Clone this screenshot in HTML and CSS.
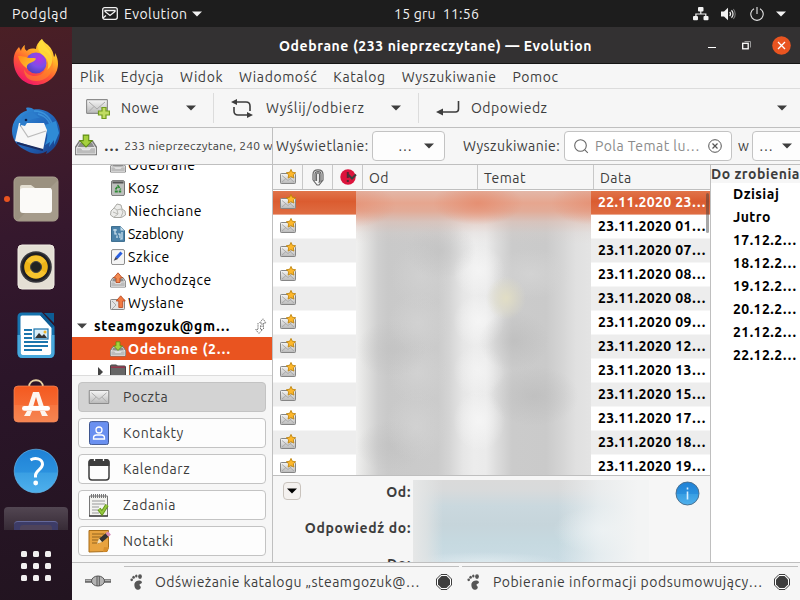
FILE: index.html
```html
<!DOCTYPE html>
<html lang="pl">
<head>
<meta charset="utf-8">
<title>Odebrane (233 nieprzeczytane) — Evolution</title>
<link rel="stylesheet" href="styles.css">
</head>
<body>
<svg class="defs" width="0" height="0" aria-hidden="true">
  <defs>
    <linearGradient id="silver" x1="0" y1="0" x2="0" y2="1"><stop offset="0" stop-color="#f6f6f6"/><stop offset="1" stop-color="#b9b9b9"/></linearGradient>
    <linearGradient id="blue" x1="0" y1="0" x2="0" y2="1"><stop offset="0" stop-color="#1f81d6"/><stop offset=".53" stop-color="#2b91de"/><stop offset=".54" stop-color="#3a9fe3"/><stop offset="1" stop-color="#4fb0ec"/></linearGradient>
    <linearGradient id="orange" x1="0" y1="0" x2="0" y2="1"><stop offset="0" stop-color="#f4591f"/><stop offset=".52" stop-color="#f56a33"/><stop offset=".53" stop-color="#f67640"/><stop offset="1" stop-color="#f68552"/></linearGradient>
    <linearGradient id="fox" x1=".9" y1="0" x2=".3" y2="1"><stop offset="0" stop-color="#fff04a"/><stop offset=".35" stop-color="#ffb527"/><stop offset=".65" stop-color="#ff5a33"/><stop offset="1" stop-color="#f0146a"/></linearGradient>
    <linearGradient id="foxhead" x1="0" y1="0" x2="1" y2=".6"><stop offset="0" stop-color="#ff8a1c"/><stop offset="1" stop-color="#ffc52b"/></linearGradient>
    <radialGradient id="globe" cx=".65" cy=".3" r=".8"><stop offset="0" stop-color="#b833e1"/><stop offset=".5" stop-color="#7a4fe8"/><stop offset="1" stop-color="#4a3db4"/></radialGradient>
    <linearGradient id="bird" x1="0" y1="0" x2="1" y2="1"><stop offset="0" stop-color="#3593dd"/><stop offset=".5" stop-color="#2268bd"/><stop offset="1" stop-color="#173b84"/></linearGradient>
    <symbol id="newmail" viewBox="0 0 16 16">
      <rect x=".5" y="4.500" width="15" height="10" rx=".8" fill="url(#silver)" stroke="#858585"/>
      <path d="M2 6.500l6 5 6-5M2 13l4-3.500M14 13l-4-3.500" fill="none" stroke="#a5a5a5" stroke-width=".9"/>
      <path d="M11 .4l1.400 2.900 3.200.4-2.300 2.200.6 3.200L11 7.600 8.100 9.100l.6-3.200L6.400 3.700l3.200-.4z" fill="#fdb72b" stroke="#b97d05" stroke-width=".8"/>
    </symbol>
    <symbol id="tray" viewBox="0 0 16 16">
      <path d="M3 5.500h10l2.500 4v5.500H.5V9.500z" fill="#dcdcdc" stroke="#777"/>
      <path d="M3.500 6.500h9l1.500 3H2z" fill="#8d8d8d"/>
      <path d="M1 10h3.500l1 1.500h5l1-1.500H15v4.500H1z" fill="#bcbcbc" stroke="#f3f3f3" stroke-width=".5"/>
    </symbol>
    <symbol id="inbox" viewBox="0 0 16 16"><use href="#tray"/><path d="M6 .8h4v4h2.500L8 9.500 3.500 4.800H6z" fill="#a6d13d" stroke="#5f8d13" stroke-width=".8"/></symbol>
    <symbol id="outbox" viewBox="0 0 16 16"><use href="#tray"/><path d="M6 10.500V6H3.500L8 .8 12.500 6H10v4.500z" fill="#f28a52" stroke="#b5441a" stroke-width=".8"/></symbol>
    <symbol id="env" viewBox="0 0 22 16"><rect x=".6" y=".6" width="20.800" height="13.800" rx=".6" fill="url(#silver)" stroke="#8c8c8c" stroke-width="1.100"/><path d="M3 3l8 7 8-7M3 12.500l5-5M19 12.500l-5-5" fill="none" stroke="#a9a9a9"/></symbol>
    <symbol id="tri" viewBox="0 0 10 6"><path d="M0 .5h10L5 5.500z" fill="currentColor"/></symbol>
    <symbol id="stop" viewBox="0 0 16 16"><path d="M5 .5h6L15.500 5v6L11 15.500H5L.5 11V5z" fill="#fff" stroke="#3d3d3d"/><path d="M5.500 2h5L14 5.500v5L10.500 14h-5L2 10.500v-5z" fill="#3d3d3d"/></symbol>
    <symbol id="foot" viewBox="0 0 14 16"><g fill="#565656"><ellipse cx="1.700" cy="5.800" rx="1.300" ry="1.400"/><ellipse cx="3.600" cy="3.200" rx="1.300" ry="1.500"/><ellipse cx="6.300" cy="2" rx="1.200" ry="1.500"/><ellipse cx="10" cy="2.600" rx="1.900" ry="2.300"/><path d="M4.500 9.500c1-2.500 4-3.500 6.500-2.500 2 1 .5 2.800-.8 3-1.500.300-.5 1.500.3 2.500 1 1.700-1 3.500-3 3.300C5 15.500 4 12 4.500 9.500z"/></g></symbol>
  </defs>
</svg>

<header class="topbar">
  <span class="activities">Podgląd</span>
  <svg class="app-ico" width="16" height="13" viewBox="0 0 16 13" fill="none" stroke="#f2f2f2" stroke-width="1.300"><rect x=".7" y=".7" width="14.600" height="11.600" rx="2"/><path d="M3 3.500h10v1L8 8.500 3 4.500zM1 11l3-2.500"/></svg>
  <span class="appname">Evolution</span>
  <svg class="caret" width="10" height="6"><use href="#tri"/></svg>
  <span class="clock">15 gru&nbsp; 11:56</span>
  <div class="tray">
    <svg width="16" height="14" viewBox="0 0 16 14" fill="#f2f2f2"><rect x="5" width="5.500" height="4.500" rx="1"/><rect y="9" width="5" height="4.300" rx="1"/><rect x="10.500" y="9" width="5" height="4.300" rx="1"/><path d="M7.200 4h1.200v2.500h5V9h-1.200V7.500H3.500V9H2.300V6.500h4.900z"/></svg>
    <svg width="15" height="14" viewBox="0 0 15 14"><path d="M0 4.500h3L7 .8v12.400L3 9.500H0z" fill="#f2f2f2"/><path d="M8.700 5a3 3 0 010 4M10.500 3.300a5.200 5.200 0 010 7.400" fill="none" stroke="#f2f2f2" stroke-width="1.200"/><path d="M12.300 2a7.500 7.500 0 010 10" fill="none" stroke="#777" stroke-width="1.100"/></svg>
    <svg width="14" height="14" viewBox="0 0 14 14" fill="none" stroke="#e6e6e6" stroke-width="1.100"><path d="M4 1.700a6.200 6.200 0 106 0M7 0v7"/></svg>
    <svg width="10" height="6" viewBox="0 0 10 6"><use href="#tri"/></svg>
  </div>
</header>

<div class="desktop">
<nav class="dock">
  <div class="cell fox"><svg width="46" height="48" viewBox="0 0 46 48">
    <path d="M29 1c-4 3-6 7-6 10-5-1-8 0-9 2-2-1-3-3-2-6-2 1-4 4-4 6L6 9C1 14 0 20 1 27c1.500 11 11 20 22 20s22-9 22-21c0-4-1-8-3-11 0 2 0 3-1 4-1-6-3-9-6-12-3-2-5-4-6-6z" fill="url(#fox)"/>
    <circle cx="23" cy="25" r="10.500" fill="url(#globe)"/>
    <path d="M5 18c4 0 7 .5 9 1.500 3 1 6 0 9 1-1 3-4 3.500-7 5-3 2-2 4-2 5C9 27 6 23 5 18z" fill="url(#foxhead)"/>
    <path d="M28 12c5 3 8 9 6 16-2 6-6 10-12 10-5 0-9-2-11-7 0 8 5 12 12 12 10 0 17-7 17-17 0-7-5-13-12-14z" fill="#ff8a28" opacity=".6"/>
    <path d="M29 1c-4 3-5 8-3 12 3 5 8 5 9 12 .5 3 0 5-1 7 4-3 6-8 5-13-1-8-9-10-10-18z" fill="#ffe13c" opacity=".75"/>
  </svg></div>
  <div class="cell"><svg width="48" height="48" viewBox="0 0 48 48">
    <path d="M14 1c3-1 6 0 8 1.500C36 1 47 11 48 24c0 12-7 20-14 23l1-3c-4 3-13 4-20 0C6 40 0 33 0 24 0 15 6 6 15 3.500z" fill="url(#bird)"/>
    <path d="M22 4c10 0 18 7 19 18M26 7c8 2 13 8 13 16" fill="none" stroke="#4aa7e8" stroke-width="1.600" opacity=".6"/>
    <path d="M33 18c3 6 3 14 0 20l5-3-1 5 5-7v5l5-12-3-12z" fill="#2f8bd6"/>
    <path d="M3 34L7 16l25 0 3 7-4 20z" fill="#f7f7f7"/><path d="M8 18l8 12 18-6" fill="none" stroke="#bbb" stroke-width="1.200"/>
    <path d="M8 20C8 11 13 5 20 5l8 6c-7 0-12 2-15 8l-4-1z" fill="#2c7dcc"/><circle cx="14" cy="13" r="1.300" fill="#0d2450"/>
    <path d="M5 36l26 7" stroke="#1a2c60" stroke-width="2"/>
  </svg></div>
  <div class="cell run"><svg width="46" height="46" viewBox="0 0 46 46"><rect x="1" y="1" width="44" height="44" rx="4.500" fill="#9b9180" stroke="#aaa08f"/><path d="M44 5L5 44h36q4 0 4-4V5z" fill="#a9a090" opacity=".7"/><path d="M7 11q0-2 2-2h9l4 3h16v10H7z" fill="#e4dfd2"/><rect x="7" y="12" width="32" height="25" rx="3" fill="#fbfaf8"/></svg></div>
  <div class="cell"><svg width="38" height="46" viewBox="0 0 38 46"><rect x="1" y="1" width="36" height="44" rx="4" fill="#e4dfd4" stroke="#f0ece3"/><circle cx="19" cy="23" r="15.800" fill="#37373c"/><circle cx="19" cy="23" r="14.200" fill="#1f1f24"/><circle cx="19" cy="23" r="11.800" fill="#eeb418"/><path d="M19 23L9 17a12 12 0 0120 0zM19 23l10 6a12 12 0 01-20 0z" fill="#ffd54a" opacity=".45"/><circle cx="19" cy="23" r="5.500" fill="#222" stroke="#444"/></svg></div>
  <div class="cell"><svg width="38" height="46" viewBox="0 0 38 46"><path d="M5 2h19l12 13v26q0 3.500-3.500 3.500h-27Q2 44.500 2 41V5q0-3 3-3z" fill="#fff" stroke="#1673ae" stroke-width="3"/><path d="M2 23v18q0 3.500 3.500 3.500h27Q36 44.500 36 41V23" fill="none" stroke="#47a8dc" stroke-width="3"/><path d="M27 1h10v10z" fill="#0d5c94"/><path d="M24 2l12 13" stroke="#0d5c94" stroke-width="3"/><path d="M7 18h8M7 22h8M7 26h8M7 30h24M7 34h24M7 38h18" stroke="#1b75ad" stroke-width="1.800"/><rect x="17" y="17" width="14" height="10" fill="#d9eef8" stroke="#1b75ad" stroke-width="1.200"/><path d="M18 26l4-5 3 3 2-2 3 4z" fill="#333"/><circle cx="28" cy="20" r="1.500" fill="#f0b52c"/></svg></div>
  <div class="cell soft"><svg width="46" height="46" viewBox="0 0 46 46"><path d="M16 9c0-9 14-9 14 0" fill="none" stroke="#e7d3a4" stroke-width="1.800"/><rect x="1" y="8" width="44" height="36" rx="4" fill="url(#orange)" stroke="#f78a5a" stroke-width=".7"/><path d="M20 14h6l5 15h-5l-3-10-3 10h-5zM14 33h5l-2 5h-6zM27 33h5l3 5h-6z" fill="#fdf5ef"/><rect x="9" y="28" width="28" height="4.800" rx="2.400" fill="#fff"/></svg></div>
  <div class="cell"><svg width="46" height="46" viewBox="0 0 46 46"><circle cx="23" cy="23" r="21.800" fill="url(#blue)" stroke="#63b5ea" stroke-width=".7"/><path d="M17.500 12c4-2.500 12-2 12 4.300 0 5-7 6-7 11v2.200" fill="none" stroke="#fff" stroke-width="3"/><circle cx="22.700" cy="35" r="2.400" fill="#fff"/></svg></div>
  <div class="peek"><i><b></b></i></div>
  <div class="grid9"><i></i><i></i><i></i><i></i><i></i><i></i><i></i><i></i><i></i></div>
</nav>

<main class="window">
  <div class="titlebar">
    <span class="title">Odebrane (233 nieprzeczytane) — Evolution</span>
    <div class="winbtns">
      <i class="min"></i>
      <svg width="9" height="9" viewBox="0 0 9 9" fill="none"><path d="M2.500.5h6v6" stroke="#999"/><rect x=".7" y="2.300" width="5.500" height="5.500" stroke="#fff" stroke-width="1.300"/></svg>
      <svg class="close" width="19" height="19" viewBox="0 0 19 19"><circle cx="9.500" cy="9.500" r="9.300" fill="#e95420"/><path d="M6 6l7 7M13 6l-7 7" stroke="#fff" stroke-width="1.300"/></svg>
    </div>
  </div>
  <div class="menubar"><span>Plik</span><span>Edycja</span><span>Widok</span><span>Wiadomość</span><span>Katalog</span><span>Wyszukiwanie</span><span>Pomoc</span></div>
  <div class="toolbar">
    <div class="tb tb-new">
      <svg width="24" height="21" viewBox="0 0 24 21"><g transform="translate(0 1)"><use href="#env" width="22" height="16"/></g><path d="M16 9.500h4v3.500h3.500v4H20v3.500h-4V17h-3.500v-4H16z" fill="#c0dc62" stroke="#719c1d" stroke-width="1.200"/></svg>
      <span>Nowe</span><svg class="c" width="10" height="6"><use href="#tri"/></svg>
    </div>
    <div class="tb tb-send">
      <svg width="22" height="21" viewBox="0 0 22 21" fill="none" stroke="#3d3d3d" stroke-width="1.600"><path d="M5 4h10q4 0 4 4v5M16 17H7q-4 0-4-4V9"/><path d="M6 1v6L0 4zM16 14v6l6-3z" fill="#3d3d3d" stroke="none"/></svg>
      <span>Wyślij/odbierz</span><svg class="c" width="10" height="6"><use href="#tri"/></svg>
    </div>
    <div class="tb tb-reply">
      <svg width="24" height="16" viewBox="0 0 24 16" fill="none"><path d="M22.500 1v8q0 3-3 3H5" stroke="#3d3d3d" stroke-width="1.600"/><path d="M7 8.500v7L0 12z" fill="#3d3d3d"/></svg>
      <span>Odpowiedz</span>
    </div>
    <svg class="c" width="10" height="6"><use href="#tri"/></svg>
  </div>

  <div class="body">
    <aside class="side">
      <div class="side-head"><svg width="24" height="24"><use href="#inbox" width="24" height="22"/></svg><b>…</b><span>233 nieprzeczytane, 240 w</span></div>
      <ul class="tree">
        <li><svg width="16" height="16"><use href="#tray"/></svg><span>Odebrane</span></li>
        <li><svg width="16" height="16" viewBox="0 0 16 16"><rect x="1.500" y=".6" width="13" height="15" rx="1.500" fill="#bdbfbd" stroke="#777"/><path d="M2.500 2.500h11" stroke="#555" stroke-width="2"/><path d="M5.500 9.500L8 6l2.700 3.500M4.800 11.500h6.400" stroke="#2d8a34" stroke-width="1.800" fill="none" stroke-dasharray="3 .9"/></svg><span>Kosz</span></li>
        <li><svg width="16" height="16" viewBox="0 0 16 16"><path d="M4 5l3-4 4 1 1 4 3 2 .5 4-4 2.500H4L.5 12 1 8z" fill="#ececea" stroke="#a9a9a4"/><path d="M4 5l3 2 1 4-4 3M7 7l4-1 2 3-2 5M8 11l-5-2" stroke="#b9b9b4" fill="none"/></svg><span>Niechciane</span></li>
        <li><svg width="16" height="16" viewBox="0 0 16 16"><path d="M1.500.6h9l4 4v10.800h-13z" fill="#4b82a9" stroke="#386a8c"/><path d="M10.500.6v4h4z" fill="#c9dfec"/><path d="M3 4h4M5 3v5h2M8 8h2v4M7 12V9.500M12 6v7h-2" stroke="#d3e6f2" fill="none" stroke-width="1.200"/></svg><span class="tight">Szablony</span></li>
        <li><svg width="16" height="16" viewBox="0 0 16 16"><rect x="1.500" y=".6" width="13" height="15" rx="1.500" fill="#f4f4f4" stroke="#8a8a8a"/><path d="M11.500 3.500l-5 5.500" stroke="#2a5fe0" stroke-width="3"/><path d="M5.500 8l-1.800 3.800L8 10z" fill="#445"/></svg><span>Szkice</span></li>
        <li><svg width="16" height="16"><use href="#outbox"/></svg><span>Wychodzące</span></li>
        <li><svg width="16" height="16" viewBox="0 0 16 16"><rect x=".5" y="4.500" width="14" height="10" rx=".8" fill="#e3e3e3" stroke="#888"/><path d="M2 6l4 4-4 4" fill="none" stroke="#aaa"/><path d="M8.800 12.500V6H6.200L10.700.8 15.300 6h-2.600v6.500z" fill="#f07a42" stroke="#b5441a" stroke-width=".8"/></svg><span>Wysłane</span></li>
        <li class="acct"><svg width="10" height="6"><use href="#tri"/></svg><span>steamgozuk@gm…</span><svg class="sync" width="14" height="16" viewBox="0 0 14 16" fill="none" stroke="#7a7a7a"><path d="M4 5v6.500H1.500l3.500 4 3.500-4H6.500V7M9.500 11V5H12L9 .8 5.500 5H8v4" stroke-dasharray="1.500 .7"/></svg></li>
        <li class="sel"><svg width="16" height="16"><use href="#inbox"/></svg><span>Odebrane (2…</span></li>
        <li class="gmail"><i></i><svg width="16" height="16" viewBox="0 0 16 16"><path d="M.5 2q0-1 1-1h5l1 1h7q1 0 1 1v12.500H.5z" fill="#666" stroke="#444"/><path d="M1 3.200h14" stroke="#94364a" stroke-width="1.600"/></svg><span>[Gmail]</span></li>
      </ul>
      <div class="switcher">
        <button class="on"><svg width="24" height="24" viewBox="0 0 24 24"><g transform="translate(1 5)"><use href="#env" width="22" height="15"/></g></svg>Poczta</button>
        <button><svg width="24" height="24" viewBox="0 0 24 24"><rect x="2.500" y=".6" width="19" height="23" rx="2" fill="#6a90f0" stroke="#3e5690"/><g fill="none" stroke="#fff" stroke-width="1.300"><circle cx="12" cy="9" r="3"/><path d="M6.500 18v-1q0-3 3-3h5q3 0 3 3v1z"/></g></svg>Kontakty</button>
        <button><svg width="24" height="24" viewBox="0 0 24 24"><rect x="2" y="3" width="20" height="20" rx="3" fill="#fdfdfd" stroke="#3d3d3d" stroke-width="1.500"/><path d="M1.500 9V5q0-3 3-3h15q3 0 3 3v4z" fill="#3d3d3d"/><path d="M7.500 1v3M16.500 1v3" stroke="#fff" stroke-width="1.300"/></svg>Kalendarz</button>
        <button><svg width="24" height="24" viewBox="0 0 24 24"><path d="M2.500 3h18v20h-18z" fill="#f3f3f0" stroke="#777"/><path d="M2 23h19" stroke="#333" stroke-width="1.300"/><path d="M4 3h16" stroke="#777" stroke-width="4" stroke-dasharray="1 1"/><path d="M5 8h13M5 11h13M5 14h7M5 17h6M5 20h7" stroke="#999"/><path d="M12 16l3 4 5-8" fill="none" stroke="#64941c" stroke-width="3.800"/><path d="M12 16l3 4 5-8" fill="none" stroke="#94c83e" stroke-width="2"/></svg>Zadania</button>
        <button><svg width="24" height="24" viewBox="0 0 24 24"><path d="M2 1.500h19.500v17L20 22.500 2 23z" fill="#e8a33f" stroke="#a86d19"/><path d="M16 23l1-5 5 .5-2 4z" fill="#d98f2c"/><path d="M5 5h12M5 8h9M5 11h7M5 14h7" stroke="#946521"/><path d="M13.500 11.500L20 6" stroke="#333" stroke-width="4.500"/><path d="M20 6l2.500-2" stroke="#d78bb5" stroke-width="4.500"/><path d="M12 9.500l-2 5.200 5-1.700z" fill="#f4e2c0"/></svg>Notatki</button>
      </div>
    </aside>

    <section class="main">
      <div class="search">
        <label class="l1">Wyświetlanie:</label>
        <div class="combo"><span>…</span><svg width="10" height="6"><use href="#tri"/></svg></div>
        <label class="l2">Wyszukiwanie:</label>
        <div class="entry">
          <svg width="15" height="15" viewBox="0 0 15 15" fill="none" stroke="#666" stroke-width="1.100"><circle cx="6.500" cy="6.500" r="5.800"/><path d="M10.800 10.800l3 3"/></svg>
          <span>Pola Temat lu…</span>
          <svg width="14" height="14" viewBox="0 0 14 14" fill="none" stroke="#555"><circle cx="7" cy="7" r="6.300"/><path d="M4.500 4.500l5 5M9.500 4.500l-5 5" stroke-width="1.200"/></svg>
        </div>
        <label class="l3">w</label>
        <div class="combo combo2"><span>…</span><svg width="10" height="6"><use href="#tri"/></svg></div>
      </div>
      <div class="cols">
        <div class="mail">
          <div class="thead">
            <div><svg width="16" height="16"><use href="#newmail"/></svg></div>
            <div><svg width="12" height="17" viewBox="0 0 12 17" fill="none" stroke="#666" stroke-width="1.200"><path d="M4.500 12V5.500q0-1.700 1.500-1.700t1.500 1.700v7q0 1-1 1M1 11V5.500Q1 .8 6 .8t5 4.700v5.500l-4 5H5l-4-5M3 12V5q0-2.500 3-2.500T9 5v8"/></svg></div>
            <div><svg class="flag" width="18" height="16" viewBox="0 0 18 16"><circle cx="8" cy="8" r="7.700" fill="#dc143c"/><path d="M7.800 3v6M7.800 11v2" stroke="#5a2430" stroke-width="2"/><path d="M8 5.500l4 4 4-4" fill="none" stroke="#3d3d3d" stroke-width="2"/></svg></div>
            <div class="t">Od</div><div class="t">Temat</div><div class="t">Data</div>
          </div>
          <div class="list">
            <div class="row sel"><svg><use href="#newmail"/></svg><span>22.11.2020 23…</span></div>
            <div class="row"><svg><use href="#newmail"/></svg><span>23.11.2020 01…</span></div>
            <div class="row"><svg><use href="#newmail"/></svg><span>23.11.2020 07…</span></div>
            <div class="row"><svg><use href="#newmail"/></svg><span>23.11.2020 08…</span></div>
            <div class="row"><svg><use href="#newmail"/></svg><span>23.11.2020 08…</span></div>
            <div class="row"><svg><use href="#newmail"/></svg><span>23.11.2020 09…</span></div>
            <div class="row"><svg><use href="#newmail"/></svg><span>23.11.2020 12…</span></div>
            <div class="row"><svg><use href="#newmail"/></svg><span>23.11.2020 13…</span></div>
            <div class="row"><svg><use href="#newmail"/></svg><span>23.11.2020 15…</span></div>
            <div class="row"><svg><use href="#newmail"/></svg><span>23.11.2020 17…</span></div>
            <div class="row"><svg><use href="#newmail"/></svg><span>23.11.2020 18…</span></div>
            <div class="row"><svg><use href="#newmail"/></svg><span>23.11.2020 19…</span></div>
            <div class="veil"></div>
            <div class="thumb"></div>
          </div>
          <div class="preview">
            <div class="expander"><svg width="10" height="6"><use href="#tri"/></svg></div>
            <div class="heads"><b>Od:</b><b>Odpowiedź do:</b><b>Do:</b></div>
            <div class="smudge"></div>
            <svg class="info" width="25" height="25" viewBox="0 0 25 25"><circle cx="12.500" cy="12.500" r="11.500" fill="url(#blue)" stroke="#496a86" stroke-width=".9"/><path d="M12.500 10.500v8M12.500 6.500v2" stroke="#d9efff" stroke-width="1.600"/></svg>
          </div>
        </div>
        <div class="todo">
          <h2>Do zrobienia</h2>
          <ul><li>Dzisiaj</li><li>Jutro</li><li>17.12.2…</li><li>18.12.2…</li><li>19.12.2…</li><li>20.12.2…</li><li>21.12.2…</li><li>22.12.2…</li></ul>
        </div>
      </div>
    </section>
  </div>

  <footer class="status">
    <svg class="plug" width="28" height="12" viewBox="0 0 28 12"><path d="M1 6h7M20 6h7" stroke="#666" stroke-width="3.600"/><path d="M1.500 5.600h25" stroke="#bbb"/><ellipse cx="14" cy="6" rx="6.500" ry="5" fill="#b4b4b4" stroke="#555"/><path d="M13 1v10M15.300 1v10" stroke="#5a5a5a"/></svg>
    <div class="task task1"><svg width="14" height="16"><use href="#foot"/></svg><span>Odświeżanie katalogu „steamgozuk@…</span><svg width="16" height="16"><use href="#stop"/></svg></div>
    <div class="task task2"><svg width="14" height="16"><use href="#foot"/></svg><span>Pobieranie informacji podsumowujący…</span><svg width="16" height="16"><use href="#stop"/></svg></div>
  </footer>
</main>
</div>
</body>
</html>
```
FILE: styles.css
```css
* { box-sizing: border-box; }
body { margin: 0; width: 800px; height: 600px; overflow: hidden; font: 14px/20px Ubuntu, "Noto Sans", sans-serif; letter-spacing: .45px; color: #3d3d3d; background: #f6f6f6; }
.defs { position: absolute; }
svg { flex: none; display: block; }
ul { list-style: none; margin: 0; padding: 0; }
span, label, b, li { white-space: nowrap; }

.topbar { height: 27px; background: #1d1d1d; color: #f2f2f2; display: flex; align-items: center; padding-left: 12px; }
.activities { width: 90px; letter-spacing: .6px; }
.appname { margin-left: 6px; width: 67px; }
.caret { margin-left: 1px; }
.clock { margin-left: 192px; letter-spacing: .25px; }
.tray { display: flex; align-items: center; margin-left: auto; gap: 14px; padding-right: 14px; }
.tray svg:first-child { margin-right: -1px; transform: translateX(1px); }
.tray svg:last-child { margin-left: -2px; }

.desktop { display: flex; height: 573px; }
.dock { width: 72px; flex: none; background: linear-gradient(170deg, #4a1f25 0, #421c2b 17%, #35182d 36%, #2b1529 60%, #221420 100%); padding-top: 2px; display: flex; flex-direction: column; }
.cell { height: 68px; flex: none; display: flex; align-items: center; justify-content: center; position: relative; }
.cell.fox { padding-bottom: 3px; }
.cell.soft { padding-bottom: 5px; }
.cell.run::before { content: ""; position: absolute; left: 4px; top: 31px; width: 6px; height: 6px; border-radius: 50%; background: #e95420; }
.peek { height: 23px; flex: none; margin: 2px 4px 0; border-radius: 4px 4px 0 0; background: linear-gradient(#524652, #372b36); padding: 14px 10px 0; }
.peek i { display: block; height: 9px; border-radius: 4px 4px 0 0; background: #3d3c67; border-top: 1px solid #64689a; padding: 3px 6px 0; }
.peek b { display: block; height: 5px; border-radius: 3px 3px 0 0; background: #4e435a; }
.grid9 { display: grid; grid-template-columns: repeat(3, 6px); gap: 6px; justify-content: center; margin-top: 21px; }
.grid9 i { height: 6px; border-radius: 1.500px; background: #f2f0f0; }

.window { flex: 1; min-width: 0; display: flex; flex-direction: column; background: #f6f6f6; }
.titlebar { height: 37px; flex: none; background: #333132; border-bottom: 1px solid #151515; color: #fff; display: flex; align-items: center; padding-top: 1px; }
.title { margin-left: 207px; font-weight: 700; letter-spacing: .58px; }
.winbtns { margin-left: auto; display: flex; align-items: center; padding-right: 9px; padding-bottom: 1px; }
.min { width: 8px; height: 1px; background: #fff; margin: 5px 26px 0 0; }
.close { margin-left: 21px; }
.menubar { height: 25px; flex: none; border-bottom: 1px solid #dcdcdc; display: flex; align-items: center; gap: 16px; padding: 1px 0 0 8px; letter-spacing: .58px; }
.toolbar { height: 39px; flex: none; border-bottom: 1px solid #bfbfbf; display: flex; align-items: center; padding-right: 13px; }
.toolbar > .c { margin-left: auto; }
.tb { height: 30px; display: flex; align-items: center; }
.tb .c { margin-left: auto; }
.tb-new { width: 142px; padding: 0 17px 0 14px; border-right: 1px solid #dcdcdc; gap: 11px; }
.tb-send { width: 205px; padding: 0 17px 0 17px; border-right: 1px solid #dcdcdc; gap: 13px; letter-spacing: .7px; }
.tb-reply { padding-left: 17px; gap: 11px; letter-spacing: .5px; }

.body { flex: 1; min-height: 0; display: flex; }
.side { width: 200px; flex: none; display: flex; flex-direction: column; overflow: hidden; }
.side-head { height: 37px; flex: none; border-bottom: 1px solid #bfbfbf; display: flex; align-items: center; padding-left: 2px; font-size: 12px; letter-spacing: .25px; overflow: hidden; }
.side-head b { margin: 0 5px 0 6px; font-size: 15px; }
.tree { height: 211px; flex: none; background: #fff; overflow: hidden; border-bottom: 1px solid #dcdcdc; color: #000; }
.tree li { height: 23px; display: flex; align-items: center; padding-left: 38px; gap: 2px; letter-spacing: .55px; }
.tree .tight { letter-spacing: 0; }
.tree li:first-child { margin-top: -12px; }
.tree .acct { font-weight: 700; padding-left: 5px; gap: 7px; letter-spacing: .65px; }
.tree .acct > svg:first-child { color: #444; }
.tree .sync { margin-left: auto; margin-right: 4px; }
.tree .sel { background: #e95420; color: #fff; font-weight: 700; letter-spacing: .65px; }
.tree .gmail { padding-left: 26px; }
.gmail i { border: 5px solid transparent; border-left: 5px solid #444; border-right: 0; margin-right: 5px; }
.switcher { padding: 6px; display: flex; flex-direction: column; gap: 6px; }
.switcher button { height: 30px; width: 188px; display: flex; align-items: center; gap: 12px; padding: 0 0 0 8px; font: inherit; letter-spacing: .55px; color: #3d3d3d; background: #fdfdfd; border: 1px solid #c3c3c3; border-radius: 4px; }
.switcher .on { background: #d3d3d3; }

.main { flex: 1; min-width: 0; border-left: 1px solid #bfbfbf; display: flex; flex-direction: column; }
.search { height: 37px; flex: none; border-bottom: 1px solid #bfbfbf; display: flex; align-items: center; overflow: hidden; }
.search label { flex: none; }
.l1 { width: 96px; margin-left: 3px; }
.combo { width: 73px; height: 30px; border: 1px solid #c3c3c3; border-radius: 4px; background: #fdfdfd; display: flex; align-items: center; padding-left: 25px; flex: none; gap: 12px; }
.l2 { margin-left: 18px; width: 101px; }
.entry { width: 168px; height: 30px; flex: none; border: 1px solid #c3c3c3; border-radius: 4px; background: #fff; display: flex; align-items: center; padding: 0 9px 0 9px; color: #8b8b8b; }
.entry span { margin-left: 6px; margin-right: auto; }
.l3 { margin-left: 6px; width: 14px; }
.combo2 { width: 60px; padding-left: 6px; gap: 9px; }
.cols { flex: 1; min-height: 0; display: flex; }
.mail { width: 438px; flex: none; border-right: 1px solid #bfbfbf; display: flex; flex-direction: column; overflow: hidden; }
.thead { height: 25px; flex: none; display: grid; grid-template-columns: 30px 30px 30px 115px 116px 116px; border-bottom: 1px solid #bfbfbf; }
.thead div { display: flex; align-items: center; justify-content: center; border-right: 1px solid #c8c8c8; }
.thead div:last-child { border: 0; }
.thead .t { justify-content: flex-start; padding-left: 6px; padding-top: 1px; }
.flag { margin-left: 2px; }
.list { height: 286px; flex: none; padding-top: 1px; background: #fff; border-bottom: 1px solid #bfbfbf; overflow: hidden; position: relative; }
.row { height: 24px; display: flex; align-items: center; padding: 0 4px 1px 7px; font-weight: 700; color: #000; border-bottom: 1px solid #f6f6f6; letter-spacing: .35px; }
.row span { margin-left: 302px; }
.row svg { width: 16px; height: 16px; }
.row:nth-child(odd) { background: #ededed; }
.row.sel { background: linear-gradient(#e0744a, #db5c30 45%, #df6d42); color: #fff; border-bottom-color: #eba78f; }
.veil { position: absolute; left: 83px; top: 1px; width: 235px; bottom: 0; background:
  radial-gradient(ellipse 45px 22px at 122px 12px, rgba(229,140,110,.85), transparent),
  radial-gradient(ellipse 40px 22px at 235px 12px, rgba(229,140,110,.7), transparent),
  radial-gradient(ellipse 40px 22px at 0 14px, rgba(229,140,110,.6), transparent),
  linear-gradient(#e3b7a8 0, #e6a68f 12px, rgba(229,168,146,.9) 20px, rgba(225,190,178,.55) 31px, rgba(220,205,200,.2) 42px, transparent 52px),
  radial-gradient(ellipse 20px 22px at 150px 107px, rgba(226,222,196,.95), transparent),
  radial-gradient(ellipse 35px 28px at 85px 60px, rgba(190,190,190,.5), transparent),
  radial-gradient(ellipse 30px 32px at 65px 85px, rgba(212,212,212,.6), transparent),
  radial-gradient(ellipse 30px 30px at 62px 132px, rgba(214,214,214,.6), transparent),
  radial-gradient(ellipse 35px 28px at 35px 158px, rgba(190,190,190,.5), transparent),
  radial-gradient(ellipse 30px 30px at 62px 182px, rgba(214,214,214,.6), transparent),
  radial-gradient(ellipse 30px 35px at 60px 235px, rgba(214,214,214,.6), transparent),
  radial-gradient(ellipse 35px 25px at 35px 255px, rgba(190,190,190,.5), transparent),
  radial-gradient(ellipse 40px 25px at 175px 83px, rgba(214,214,214,.7), transparent),
  radial-gradient(ellipse 35px 30px at 158px 150px, rgba(182,182,182,.5), transparent),
  radial-gradient(ellipse 45px 30px at 178px 205px, rgba(182,182,182,.5), transparent),
  radial-gradient(ellipse 26px 26px at 123px 80px, rgba(247,247,247,.7), transparent),
  radial-gradient(ellipse 26px 26px at 123px 130px, rgba(247,247,247,.8), transparent),
  radial-gradient(ellipse 26px 26px at 123px 180px, rgba(247,247,247,.6), transparent),
  radial-gradient(ellipse 26px 30px at 123px 230px, rgba(247,247,247,.8), transparent),
  linear-gradient(90deg, #f0f0ef 0, #e3e3e2 9px, #cfcfcf 22px, #c9c9c9 32px, #cbcbcb 82px, #d4d4d4 93px, #e6e6e6 107px, #ececec 118px, #ebebeb 130px, #dcdcdc 141px, #cbcbcb 156px, #cacaca 190px, #d4d4d4 205px, #e0e0e0 220px, #e4e4e4 100%); }
.thumb { position: absolute; right: 1px; top: 3px; width: 3px; height: 40px; border-radius: 2px; background: rgba(60,60,60,.45); }
.preview { flex: 1; min-height: 0; display: flex; overflow: hidden; align-items: flex-start; }
.expander { width: 18px; height: 18px; margin: 6px 0 0 10px; border: 1px solid #c9c3bd; border-radius: 4px; background: #f4f1ef; display: flex; align-items: center; justify-content: center; color: #000; flex: none; }
.heads { width: 110px; height: 86px; overflow: hidden; display: flex; flex-direction: column; align-items: flex-end; padding-top: 6px; flex: none; letter-spacing: .65px; }
.heads b { height: 36px; flex: none; }
.smudge { width: 236px; height: 82px; margin: 4px 0 0 2px; flex: none; background:
  linear-gradient(90deg, #e6e7e7 0, rgba(226,228,228,.75) 14px, rgba(220,224,226,0) 30px),
  linear-gradient(90deg, transparent 145px, rgba(240,243,244,.7) 185px, #f3f4f4 225px),
  radial-gradient(ellipse 50px 24px at 190px 50px, rgba(228,238,242,.9), transparent),
  radial-gradient(ellipse 80px 10px at 70px 82px, rgba(225,236,240,.8), transparent),
  linear-gradient(#dadada 0, #d8dadb 10px, #cad8de 26px, #c6d5db 45px, #c6d9e0 62px, #cadce4 82px); }
.info { margin: 5px 0 0 26px; }
.todo { flex: 1; min-width: 0; background: #fff; overflow: hidden; font-weight: 700; color: #000; }
.todo h2 { margin: 0; font-size: 14px; line-height: 18px; height: 18px; background: #f6f6f6; color: #3d3d3d; white-space: nowrap; letter-spacing: .5px; }
.todo li { height: 23px; line-height: 23px; padding-left: 22px; }

.status { height: 38px; flex: none; border-top: 1px solid #bfbfbf; display: flex; align-items: flex-start; padding-top: 3px; }
.plug { margin: 9px 0 0 12px; }
.task { height: 31px; border-top: 1px solid #bfbfbf; display: flex; align-items: center; }
.task1 { margin-left: 12px; width: 335px; padding: 0 7px 0 6px; }
.task2 { margin-left: 3px; width: 336px; padding: 0 8px 0 5px; letter-spacing: .5px; }
.task span { margin-left: 11px; margin-right: auto; }
.task2 span { margin-left: 12px; }
```
